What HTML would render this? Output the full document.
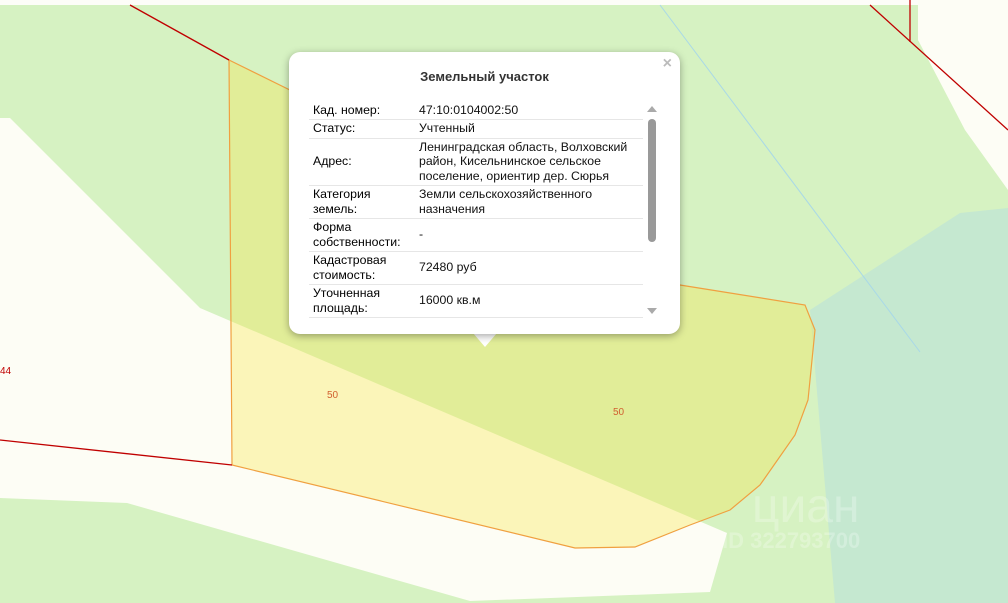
<!DOCTYPE html>
<html><head><meta charset="utf-8"><style>
body{margin:0;width:1008px;height:603px;overflow:hidden;font-family:"Liberation Sans",Arial,sans-serif;position:relative;background:#d6f2c2}
svg{position:absolute;left:0;top:0}
.pop{position:absolute;left:289px;top:52px;width:391px;height:282px;background:#fff;border-radius:11px;box-shadow:0 2px 8px rgba(0,0,0,.35)}
.arrow{position:absolute;left:473px;top:333px;width:0;height:0;border-left:12px solid transparent;border-right:12px solid transparent;border-top:14px solid #fff}
.title{position:absolute;left:0;width:391px;top:17px;text-align:center;font-weight:bold;font-size:13px;color:#333}
.x{position:absolute;right:8px;top:3px;color:#bbb;font-size:16px;font-weight:bold}
table{position:absolute;left:20px;top:50px;width:334px;border-collapse:collapse;font-size:12.3px;color:#111}
td{border-bottom:1px solid #e6e6e6;padding:0 4px;vertical-align:middle;line-height:14.5px}
td.l{width:98px;color:#000}
.sb{position:absolute;left:359px;top:67px;width:8px;height:123px;background:#999;border-radius:4px}
.up{position:absolute;left:358px;top:54px;border-left:5px solid transparent;border-right:5px solid transparent;border-bottom:6px solid #aaa}
.dn{position:absolute;left:358px;top:256px;border-left:5px solid transparent;border-right:5px solid transparent;border-top:6px solid #aaa}
</style></head><body>
<svg width="1008" height="603">
<rect x="0" y="0" width="1008" height="5" fill="#fdfdf8"/>
<polygon points="918,0 1008,0 1008,190 965,130 918,40" fill="#fdfdf5"/>
<polygon points="810,310 960,213 1008,208 1008,603 835,603" fill="#c5e8d0"/>
<polygon points="0,118 10,118 200,308 727,533 710,592 470,601 127,503 0,498" fill="#fdfdf5"/>
<polygon points="229,60 300,95 560,230 680,285 805,305 815,330 808,400 795,435 760,485 730,510 690,525 635,547 575,548 232,465" fill="#f5e44a" fill-opacity="0.35" stroke="#f0a040" stroke-width="1.2"/>
<line x1="660" y1="5" x2="920" y2="352" stroke="#a8d8e8" stroke-width="1"/>
<polyline points="130,5 229,60" fill="none" stroke="#c00000" stroke-width="1.3"/>
<polyline points="0,440 232,465" fill="none" stroke="#c00000" stroke-width="1.3"/>
<polyline points="870,5 1008,130" fill="none" stroke="#c00000" stroke-width="1.3"/>
<polyline points="910,0 910,42" fill="none" stroke="#c00000" stroke-width="1.3"/>
<text x="327" y="398" font-size="10" fill="#d06030" font-family="Liberation Sans">50</text>
<text x="613" y="415" font-size="10" fill="#d06030" font-family="Liberation Sans">50</text>
<text x="0" y="374" font-size="10" fill="#c00000" font-family="Liberation Sans">44</text>
<text x="752" y="522" font-size="48" fill="#ffffff" fill-opacity="0.25" font-family="Liberation Sans">циан</text>
<text x="722" y="548" font-size="22" font-weight="bold" fill="#ffffff" fill-opacity="0.25" font-family="Liberation Sans">ID 322793700</text>
</svg>
<div class="arrow"></div>
<div class="pop">
<div class="title">Земельный участок</div>
<div class="x">×</div>
<table>
<tr style="height:17px"><td class="l">Кад. номер:</td><td>47:10:0104002:50</td></tr>
<tr style="height:19px"><td class="l">Статус:</td><td>Учтенный</td></tr>
<tr style="height:47px"><td class="l">Адрес:</td><td>Ленинградская область, Волховский район, Кисельнинское сельское поселение, ориентир дер. Сюрья</td></tr>
<tr style="height:33px"><td class="l">Категория земель:</td><td>Земли сельскохозяйственного назначения</td></tr>
<tr style="height:33px"><td class="l">Форма собственности:</td><td>-</td></tr>
<tr style="height:33px"><td class="l">Кадастровая стоимость:</td><td>72480 руб</td></tr>
<tr style="height:33px"><td class="l">Уточненная площадь:</td><td>16000 кв.м</td></tr>
</table>
<div class="up"></div><div class="sb"></div><div class="dn"></div>
</div>
</body></html>
